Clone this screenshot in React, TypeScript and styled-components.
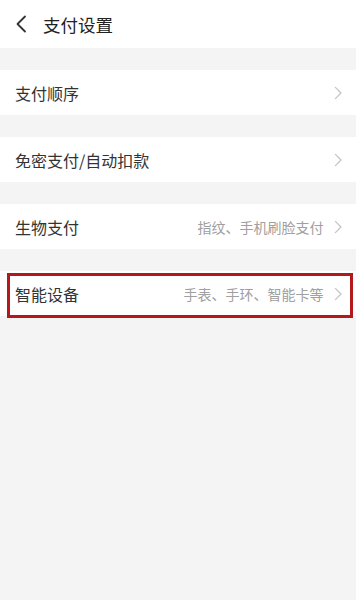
import React from 'react';
import styled, {createGlobalStyle} from "styled-components";

const GlobalStyle = createGlobalStyle`
  html, body {
    margin: 0;
    padding: 0;
    background: #f4f4f4;
    font-family: "Noto Sans CJK SC", "Noto Sans", sans-serif;
  }
`

type RowProps = {
    label: string
    hint?: string
    highlighted?: boolean
}

const Chevron: React.FC<{ color: string, size: number, width: number }> = ({color, size, width}) => (
    <svg width={size * 0.6} height={size} viewBox="0 0 6 10" fill="none">
        <path d="M1 1 L5 5 L1 9" stroke={color} strokeWidth={width} strokeLinecap="round" strokeLinejoin="round"/>
    </svg>
)

const SettingRow: React.FC<RowProps> = (props) => {
    return (
        <Row highlighted={props.highlighted}>
            <Label>{props.label}</Label>
            <Right>
                {props.hint && <Hint>{props.hint}</Hint>}
                <Chevron color="#c4c4c4" size={14} width={0.9}/>
            </Right>
        </Row>
    );
};

export default function App() {
    return (
        <Page>
            <GlobalStyle/>
            <Header>
                <BackButton>
                    <svg width="12" height="18" viewBox="0 0 12 18" fill="none">
                        <path d="M10 1.5 L2.5 9 L10 16.5" stroke="#333" strokeWidth="1.8" strokeLinecap="round" strokeLinejoin="round"/>
                    </svg>
                </BackButton>
                <Title>支付设置</Title>
            </Header>
            <List>
                <SettingRow label="支付顺序"/>
                <SettingRow label="免密支付/自动扣款"/>
                <SettingRow label="生物支付" hint="指纹、手机刷脸支付"/>
                <SettingRow label="智能设备" hint="手表、手环、智能卡等" highlighted/>
            </List>
        </Page>
    );
}

const Page = styled.div`
  width: 356px;
  min-height: 600px;
  background: #f4f4f4;
`

const Header = styled.div`
  height: 48px;
  background: #ffffff;
  display: flex;
  align-items: center;
  padding-left: 15px;
  gap: 16px;
`

const BackButton = styled.div`
  display: flex;
  align-items: center;
`

const Title = styled.h1`
  margin: 0;
  font-size: 17.5px;
  font-weight: 400;
  color: #222;
`

const List = styled.div`
  display: flex;
  flex-direction: column;
  gap: 22px;
  padding-top: 22px;
`

const Row = styled.div<{ highlighted?: boolean }>`
  position: relative;
  height: 45px;
  background: #ffffff;
  display: flex;
  align-items: center;
  justify-content: space-between;
  padding: 0 14px 0 15px;

  &::after {
    content: "";
    display: ${p => p.highlighted ? "block" : "none"};
    position: absolute;
    left: 7px;
    right: 3px;
    top: 2px;
    bottom: -2px;
    border: 3px solid #b3191a;
  }
`

const Label = styled.span`
  font-size: 16px;
  color: #333;
`

const Right = styled.div`
  display: flex;
  align-items: center;
  gap: 10px;
`

const Hint = styled.span`
  font-size: 14px;
  color: #a0a0a0;
`
